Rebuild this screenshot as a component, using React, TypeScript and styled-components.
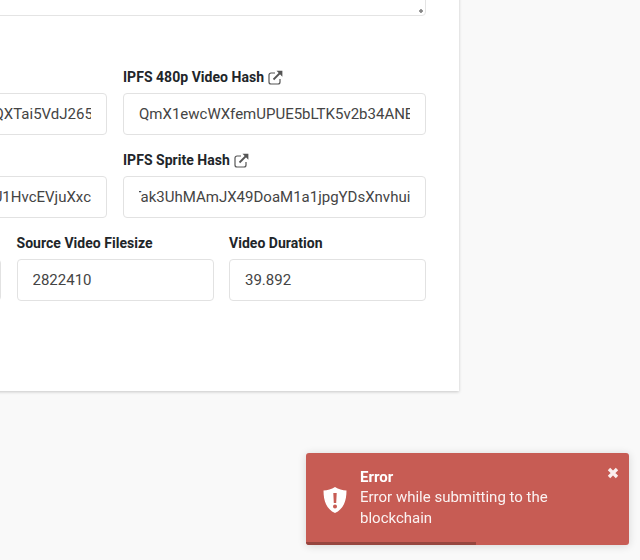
import { useLayoutEffect, useRef } from "react";
import styled, { createGlobalStyle } from "styled-components";

const fields = {
  video: "QmYv7hP2nKcRw9LmT4sGd8BfQXTai5VdJ265pLs8KwN3xZ",
  video480: "QmX1ewcWXfemUPUE5bLTK5v2b34ANEq7RfZs9YtHcMd2Lp",
  thumb: "QmPd3sLk8VbNf2RxT7qWmZg6U1HvcEVjuXxc",
  sprite: "QmTak3UhMAmJX49DoaM1a1jpgYDsXnvhuiWq8ZcK2LfPe6",
};

const GlobalStyle = createGlobalStyle`
  html, body {
    margin: 0;
    height: 100%;
    overflow: hidden;
    background: #f9f9f9;
    font-family: Roboto, "Liberation Sans", sans-serif;
  }
`;

const Page = styled.div`
  width: 640px;
  height: 560px;
  overflow: hidden;
`;

const Card = styled.div`
  box-sizing: border-box;
  width: 700px;
  margin: -120px 0 0 -241px;
  height: 510.5px;
  padding: 0 33px 0 45px;
  background: #fff;
  box-shadow: 0 1px 3px rgba(0, 0, 0, 0.2);
  display: flex;
  flex-direction: column;
`;

const Description = styled.textarea`
  box-sizing: border-box;
  display: block;
  width: 100%;
  height: 136px;
  flex: none;
  border: 1px solid #e4e4e4;
  border-radius: 4px;
  background: #fff;
  margin-bottom: 51px;

  &::-webkit-resizer {
    background: radial-gradient(circle at 11px 11px, #888 1.5px, transparent 2px);
  }
`;

const Row = styled.div<{ $cols: number }>`
  display: grid;
  grid-template-columns: repeat(${(p) => p.$cols}, 1fr);
  column-gap: ${(p) => (p.$cols === 2 ? 16 : 15.5)}px;
  margin-bottom: 15px;
`;

const Field = styled.div`
  min-width: 0;
`;

const Label = styled.label`
  display: flex;
  align-items: center;
  gap: 4px;
  height: 20px;
  margin-bottom: 6px;
  font-size: 14px;
  font-weight: 700;
  letter-spacing: 0.03px;
  color: #212529;
`;

const Input = styled.input`
  box-sizing: border-box;
  display: block;
  width: 100%;
  height: 42px;
  padding: 0 15px;
  border: 1px solid #e2e2e2;
  border-radius: 4px;
  background: #fff;
  outline: none;
  font-family: inherit;
  font-size: 15px;
  color: #444;
`;

const Toast = styled.div`
  position: fixed;
  left: 306px;
  top: 453px;
  width: 323px;
  height: 92px;
  box-sizing: border-box;
  padding: 14px 40px 0 54px;
  background: #c75c54;
  border-radius: 3px;
  box-shadow: 0 1px 8px rgba(0, 0, 0, 0.14);
  color: #fff;
  overflow: hidden;
`;

const ToastIcon = styled.svg`
  position: absolute;
  left: 16px;
  top: 33px;
  width: 26px;
  height: 28px;
`;

const ToastTitle = styled.div`
  font-size: 15px;
  font-weight: 700;
  line-height: 20px;
`;

const ToastText = styled.div`
  font-size: 15px;
  line-height: 20.5px;
  color: rgba(255, 255, 255, 0.92);
`;

const CloseIcon = styled.svg`
  position: absolute;
  right: 10px;
  top: 14px;
  width: 12px;
  height: 12px;
`;

const Progress = styled.div`
  position: absolute;
  left: 0;
  bottom: 0;
  height: 3px;
  background: #96463f;
`;

const ExternalLink = () => (
  <svg width="15" height="15" viewBox="0 0 15 15" fill="none" stroke="#555" aria-hidden="true">
    <path d="M7 3H3a2 2 0 0 0-2 2v7a2 2 0 0 0 2 2h7a2 2 0 0 0 2-2V9" strokeWidth="1.2" />
    <path d="M5.5 9.5 12 3" strokeWidth="1.8" />
    <path d="M8.5 0.8H14.4V6.7Z" fill="#555" stroke="none" />
  </svg>
);

const ScrolledInput = ({ value, scroll }: { value: string; scroll: number }) => {
  const ref = useRef<HTMLInputElement>(null);
  useLayoutEffect(() => {
    if (ref.current) ref.current.scrollLeft = scroll;
  }, [scroll]);
  return <Input ref={ref} defaultValue={value} readOnly />;
};

const App = () => {
  return (
    <Page>
      <GlobalStyle />
      <Card>
        <Description />
        <Row $cols={2}>
          <Field>
            <Label>IPFS Source Video Hash <ExternalLink /></Label>
            <ScrolledInput value={fields.video} scroll={43} />
          </Field>
          <Field>
            <Label>IPFS 480p Video Hash <ExternalLink /></Label>
            <ScrolledInput value={fields.video480} scroll={0} />
          </Field>
        </Row>
        <Row $cols={2}>
          <Field>
            <Label>IPFS Thumbnail Hash <ExternalLink /></Label>
            <ScrolledInput value={fields.thumb} scroll={999} />
          </Field>
          <Field>
            <Label>IPFS Sprite Hash <ExternalLink /></Label>
            <ScrolledInput value={fields.sprite} scroll={30} />
          </Field>
        </Row>
        <Row $cols={3}>
          <Field>
            <Label>Video Resolution</Label>
            <ScrolledInput value="1280" scroll={0} />
          </Field>
          <Field>
            <Label>Source Video Filesize</Label>
            <ScrolledInput value="2822410" scroll={0} />
          </Field>
          <Field>
            <Label>Video Duration</Label>
            <ScrolledInput value="39.892" scroll={0} />
          </Field>
        </Row>
      </Card>
      <Toast>
        <ToastIcon viewBox="0 0 26 28" aria-hidden="true">
          <path
            fill="#fff"
            fillRule="evenodd"
            d="M13 1C9.5 3.4 5.5 4.4 1.5 4.4 1.5 15 4.5 23 13 27c8.5-4 11.5-12 11.5-22.6C20.5 4.4 16.5 3.4 13 1ZM11.3 7h3.4l-.5 10h-2.4ZM13 18.4a2 2 0 1 1 0 4 2 2 0 0 1 0-4Z"
          />
        </ToastIcon>
        <ToastTitle>Error</ToastTitle>
        <ToastText>Error while submitting to the blockchain</ToastText>
        <CloseIcon viewBox="0 0 12 12" aria-hidden="true">
          <path d="M2 2l8 8M10 2l-8 8" stroke="#fff" strokeWidth="3.4" opacity="0.9" />
        </CloseIcon>
        <Progress style={{ width: `${(170 / 323) * 100}%` }} />
      </Toast>
    </Page>
  );
};

export default App;
